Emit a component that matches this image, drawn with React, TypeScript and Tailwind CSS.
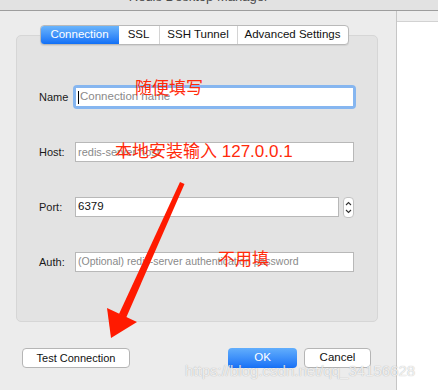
import React from "react";

const sans = { fontFamily: '"Liberation Sans", Arial, sans-serif' };
const cjk = { fontFamily: '"Liberation Sans", "Noto Sans CJK SC", sans-serif' };

function Row({ label, children }: { label: string; children: React.ReactNode }) {
  return (
    <div className="flex h-[20px] items-center">
      <div className="w-[36px] text-[11px] text-[#1a1a1a]">{label}</div>
      {children}
    </div>
  );
}

export default function App() {
  return (
    <div className="relative h-[390px] w-[438px] overflow-hidden bg-white" style={sans}>
      {/* title bar */}
      <div className="h-[11px] overflow-hidden border-b border-[#9d9d9d] bg-[#e2e2e2]">
        <div className="mt-[-11px] w-[397px] text-center text-[13px] leading-[16px] text-[#4a4a4a]">
          Redis Desktop Manager
        </div>
      </div>
      <div className="flex h-[379px]">
        {/* dialog */}
        <div className="flex w-[397px] flex-col border-r border-[#c6c6c6] bg-[#ececec] pl-[16px] pr-[18px] pt-[14px]">
          <div className="relative z-10 flex justify-center pr-[6px]">
            <div className="flex h-[20px] overflow-hidden rounded-[4px] border border-[#b9b9b9] bg-white text-[11.5px] shadow-[0_1px_1px_rgba(0,0,0,0.08)]">
              <div className="flex w-[78px] items-center justify-center bg-gradient-to-b from-[#6ab4fb] to-[#0f6ff6] text-white">
                Connection
              </div>
              <div className="flex w-[41px] items-center justify-center border-r border-[#d4d4d4] text-[#111]">SSL</div>
              <div className="flex w-[78px] items-center justify-center border-r border-[#d4d4d4] text-[#111]">SSH Tunnel</div>
              <div className="flex w-[110px] items-center justify-center text-[#111]">Advanced Settings</div>
            </div>
          </div>
          <div className="mt-[-10px] flex h-[287px] flex-col gap-[35px] rounded-[5px] border border-[#d6d6d6] bg-[#e3e3e3] pl-[22px] pr-[23px] pt-[51px]">
            <Row label="Name">
              <div className="ml-[-2px] mr-[-2px] flex h-[24px] flex-1 items-center rounded-[4px] bg-[#86b6f0] p-[3px]">
                <div className="flex h-[18px] flex-1 items-center bg-white pl-[2px] text-[11.5px] text-[#8a8a8a]">
                  <span className="mr-[1px] inline-block h-[13px] w-[1px] bg-black" />
                  Connection name
                </div>
              </div>
            </Row>
            <Row label="Host:">
              <div className="flex h-[20px] flex-1 items-center border border-[#b8b8b8] bg-white pl-[2px] text-[11px] text-[#8a8a8a]">
                redis-server host
              </div>
            </Row>
            <Row label="Port:">
              <div className="flex h-[20px] flex-1 items-center border border-[#b8b8b8] bg-white pl-[2px] text-[11.5px] text-[#111]">
                6379
              </div>
              <div className="ml-[4px] flex h-[21px] w-[11px] flex-col items-center justify-center rounded-[4px] border border-[#c2c2c2] bg-white">
                <svg width="7" height="15" viewBox="0 0 7 15">
                  <path d="M1 5 L3.5 2.5 L6 5" fill="none" stroke="#333" strokeWidth="1.1" />
                  <path d="M1 10 L3.5 12.5 L6 10" fill="none" stroke="#333" strokeWidth="1.1" />
                </svg>
              </div>
            </Row>
            <Row label="Auth:">
              <div className="flex h-[20px] flex-1 items-center border border-[#b8b8b8] bg-white pl-[2px] text-[10.5px] text-[#8a8a8a]">
                (Optional) redis-server authentication password
              </div>
            </Row>
          </div>
          <div className="mt-[26px] flex items-center pl-[6px]">
            <div className="flex h-[20px] w-[108px] items-center justify-center rounded-[4px] border border-[#b5b5b5] bg-white text-[11px] text-[#111]">
              Test Connection
            </div>
            <div className="ml-[98px] flex h-[20px] w-[69px] items-center justify-center rounded-[4px] bg-gradient-to-b from-[#62aefc] to-[#1670f6] text-[11.5px] text-white">
              OK
            </div>
            <div className="ml-[7px] flex h-[20px] w-[67px] items-center justify-center rounded-[4px] border border-[#b5b5b5] bg-white text-[11.5px] text-[#111]">
              Cancel
            </div>
          </div>
        </div>
        {/* right side */}
        <div className="flex flex-1 flex-col">
          <div className="h-[11px] border-b border-[#d2d2d2] bg-[#eeeeee]" />
          <div className="flex-1 bg-white" />
        </div>
      </div>

      {/* annotations */}
      <div className="absolute left-[135px] top-[79px] text-[17px] leading-[20px] text-[#ff2a0a]" style={cjk}>
        随便填写
      </div>
      <div className="absolute left-[115px] top-[142px] text-[17px] leading-[20px] text-[#ff2a0a]" style={cjk}>
        本地安装输入 127.0.0.1
      </div>
      <div className="absolute left-[218px] top-[250px] text-[17px] leading-[20px] text-[#ff2a0a]" style={cjk}>
        不用填
      </div>
      <svg className="absolute left-0 top-0" width="438" height="390" viewBox="0 0 438 390">
        <polygon points="180,182 184.5,184 126,318 119,314" fill="#ff1a00" />
        <polygon points="107,308 137,322 111,338" fill="#ff1a00" />
      </svg>
      <div
        className="absolute left-[185px] top-[361px] text-[15px] leading-[20px] text-white/80 [text-shadow:0_0_1px_rgba(0,0,0,0.35)]"
        style={sans}
      >
        https://blog.csdn.net/qq_34156628
      </div>
    </div>
  );
}
